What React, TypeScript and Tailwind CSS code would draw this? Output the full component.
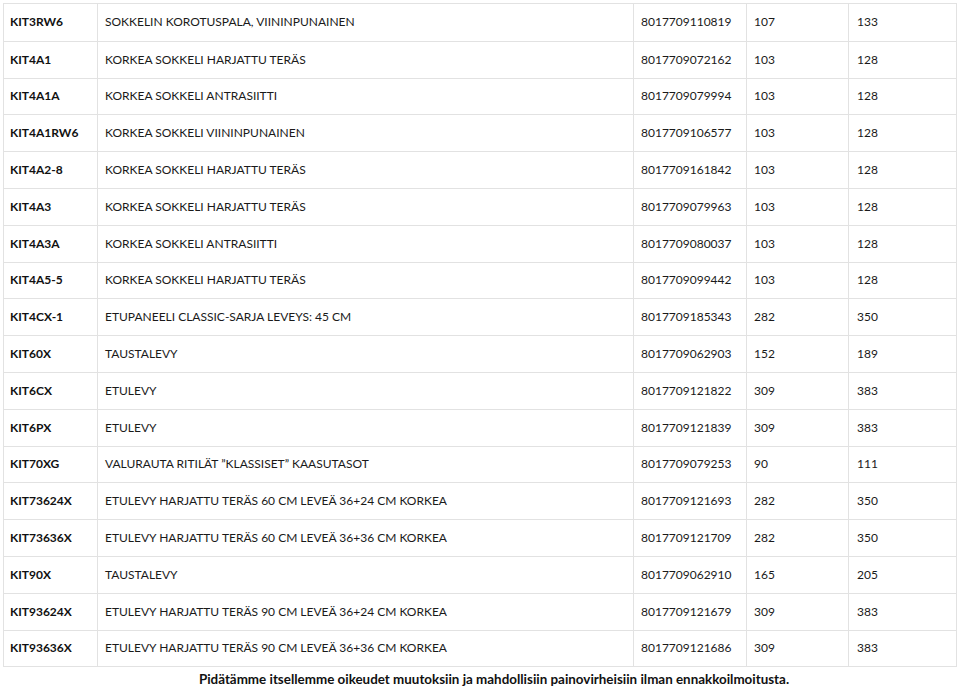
const rows: [string, string, string, string, string][] = [
  ["KIT3RW6", "SOKKELIN KOROTUSPALA, VIININPUNAINEN", "8017709110819", "107", "133"],
  ["KIT4A1", "KORKEA SOKKELI HARJATTU TERÄS", "8017709072162", "103", "128"],
  ["KIT4A1A", "KORKEA SOKKELI ANTRASIITTI", "8017709079994", "103", "128"],
  ["KIT4A1RW6", "KORKEA SOKKELI VIININPUNAINEN", "8017709106577", "103", "128"],
  ["KIT4A2-8", "KORKEA SOKKELI HARJATTU TERÄS", "8017709161842", "103", "128"],
  ["KIT4A3", "KORKEA SOKKELI HARJATTU TERÄS", "8017709079963", "103", "128"],
  ["KIT4A3A", "KORKEA SOKKELI ANTRASIITTI", "8017709080037", "103", "128"],
  ["KIT4A5-5", "KORKEA SOKKELI HARJATTU TERÄS", "8017709099442", "103", "128"],
  ["KIT4CX-1", "ETUPANEELI CLASSIC-SARJA LEVEYS: 45 CM", "8017709185343", "282", "350"],
  ["KIT60X", "TAUSTALEVY", "8017709062903", "152", "189"],
  ["KIT6CX", "ETULEVY", "8017709121822", "309", "383"],
  ["KIT6PX", "ETULEVY", "8017709121839", "309", "383"],
  ["KIT70XG", "VALURAUTA RITILÄT ”KLASSISET” KAASUTASOT", "8017709079253", "90", "111"],
  ["KIT73624X", "ETULEVY HARJATTU TERÄS 60 CM LEVEÄ 36+24 CM KORKEA", "8017709121693", "282", "350"],
  ["KIT73636X", "ETULEVY HARJATTU TERÄS 60 CM LEVEÄ 36+36 CM KORKEA", "8017709121709", "282", "350"],
  ["KIT90X", "TAUSTALEVY", "8017709062910", "165", "205"],
  ["KIT93624X", "ETULEVY HARJATTU TERÄS 90 CM LEVEÄ 36+24 CM KORKEA", "8017709121679", "309", "383"],
  ["KIT93636X", "ETULEVY HARJATTU TERÄS 90 CM LEVEÄ 36+36 CM KORKEA", "8017709121686", "309", "383"],
];

export default function App() {
  return (
    <div className="w-[959px] h-[687px] bg-white pt-[3px] pl-[3px] text-[#1a1a1a] font-['Lato',sans-serif]">
      {/* Price table */}
      <div className="w-[954px] border border-[#e2e2e2]">
        {rows.map((r, i) => (
          <div
            key={r[0]}
            className={`grid grid-cols-[93px_536px_113px_102px_1fr] h-[36.8px] text-[12px] ${
              i > 0 ? "border-t border-[#e2e2e2]" : ""
            }`}
          >
            <div className="flex items-center pl-[6px] font-bold text-[#111]">{r[0]}</div>
            <div className="flex items-center pl-[7px] border-l border-[#e2e2e2]">{r[1]}</div>
            <div className="flex items-center pl-[7px] border-l border-[#e2e2e2]">{r[2]}</div>
            <div className="flex items-center pl-[7px] border-l border-[#e2e2e2]">{r[3]}</div>
            <div className="flex items-center pl-[8px] border-l border-[#e2e2e2]">{r[4]}</div>
          </div>
        ))}
      </div>

      {/* Disclaimer */}
      <p className="mt-[5px] pl-[26px] text-center text-[13.4px] font-bold leading-[14px] text-[#111]">
        Pidätämme itsellemme oikeudet muutoksiin ja mahdollisiin painovirheisiin ilman ennakkoilmoitusta.
      </p>
    </div>
  );
}
